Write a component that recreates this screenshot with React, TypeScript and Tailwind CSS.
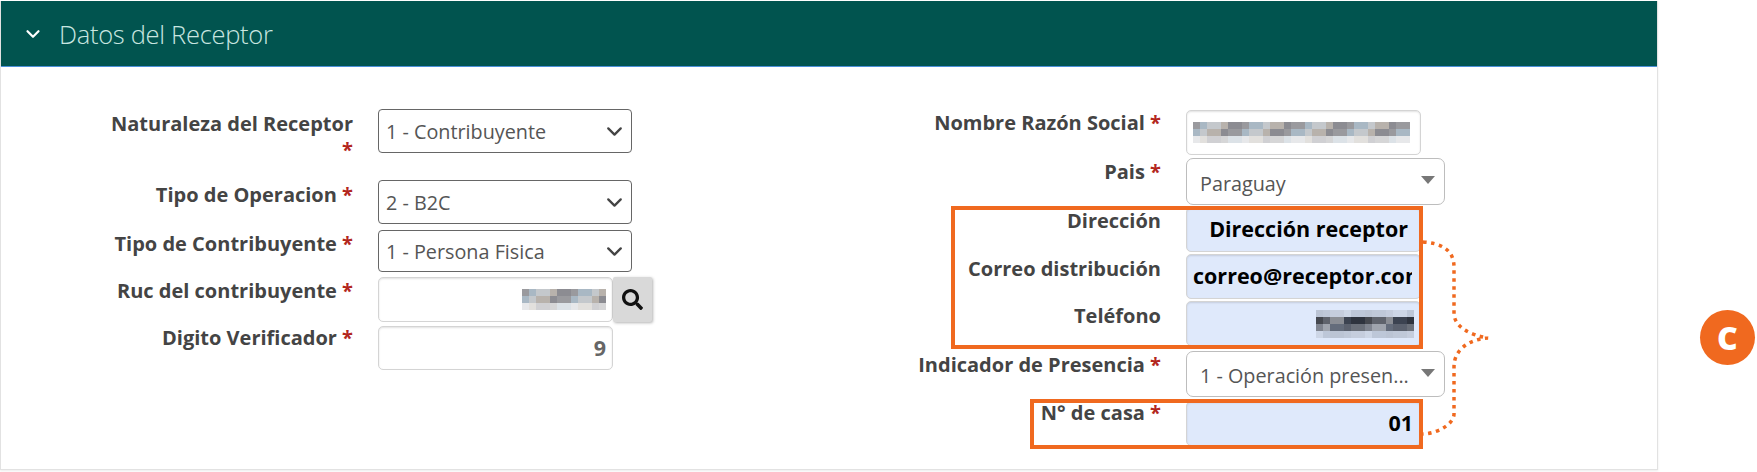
import React from 'react';
import { ChevronDown } from 'lucide-react';
import { FaSearch } from 'react-icons/fa';

const labelClasses = "block text-right font-bold text-[20px] leading-[26px] text-[#444]";
const inputBase = "rounded-[5px] border border-[#d4d4d4] shadow-[inset_0_1px_2px_rgba(0,0,0,0.12)] flex items-center text-[21.5px] overflow-hidden whitespace-nowrap";
const filledInput = "bg-[#dfe9fb] font-bold text-black";

const Star = () => <span className="text-[#b3261e]"> *</span>;

// pixelated stand-in for the blurred-out values
const Blur = ({ width, dark }: { width: number; dark?: boolean }) => {
    const cols = Math.round(width / 7);
    const shades = dark ? ['#2f343f', '#5f636c', '#3c4351', '#45484f', '#8a8d94'] : ['#9a9a9e', '#c4c8cc', '#8c8c92', '#a9b8c4', '#b8b2ac'];
    const rows = dark ? [0.2, 1, 0.75, 0.2] : [1, 1, 0.4];
    return (
        <span className="flex flex-col shrink-0">
            {rows.map((opacity, r) => (
                <span key={r} className="flex" style={{ opacity }}>
                    {Array.from({ length: cols }).map((_, i) => (
                        <span key={i} className="w-[7px] h-[7px]" style={{ backgroundColor: shades[(i * 7 + r * 3 + (i % 3)) % 5] }} />
                    ))}
                </span>
            ))}
        </span>
    );
};

const LeftRow = ({ label, children, className }: { label: React.ReactNode; children: React.ReactNode; className?: string }) => (
    <div className={`flex ${className || ''}`}>
        <div className="w-[352px] shrink-0 pl-[104px]">{label}</div>
        <div className="ml-[25px]">{children}</div>
    </div>
);

const NativeSelect = ({ text, height }: { text: string; height: string }) => (
    <div className={`w-[254px] ${height} rounded-[4px] border border-[#666] bg-white flex items-center justify-between pl-[7px] pr-[4px] text-[19.8px] text-[#555]`}>
        <span className="pt-[2px]">{text}</span>
        <ChevronDown size={25} strokeWidth={2.2} className="text-[#444]" />
    </div>
);

const RoundSelect = ({ text, height }: { text: string; height: string }) => (
    <div className={`w-[259px] ${height} rounded-[7px] border border-[#bdbdbd] bg-white flex items-center justify-between pl-[13px] pr-[9px] text-[19.8px] text-[#555]`}>
        <span className="pt-[4px]">{text}</span>
        <span className="w-0 h-0 mb-[3px] border-l-[7px] border-r-[7px] border-t-[8px] border-l-transparent border-r-transparent border-t-[#777]" />
    </div>
);

const rightRows = [
    { label: 'Nombre Razón Social', star: true, offset: '', row: '', body: <div className={`${inputBase} w-[235px] h-[45px] pl-[6px]`}><Blur width={217} /></div> },
    { label: 'Pais', star: true, offset: 'pt-[1px]', row: 'mt-[3px]', body: <RoundSelect text="Paraguay" height="h-[47px]" /> },
    { label: 'Dirección', star: false, offset: 'pt-[1px]', row: 'mt-[2px]', body: <div className={`${inputBase} ${filledInput} w-[235px] h-[45px] justify-end pr-[12px]`}>Dirección receptor</div> },
    { label: 'Correo distribución', star: false, offset: 'pt-[2px]', row: 'mt-[2px]', body: <div className={`${inputBase} ${filledInput} w-[235px] h-[45px] pl-[6px]`}><span className="block w-[219px] overflow-hidden">correo@receptor.com</span></div> },
    { label: 'Teléfono', star: false, offset: 'pt-[2px]', row: 'mt-[2px]', body: <div className={`${inputBase} w-[235px] h-[45px] justify-end pr-[6px] bg-[#dfe9fb]`}><Blur width={98} dark /></div> },
    { label: 'Indicador de Presencia', star: true, offset: 'pt-[1px]', row: 'mt-[5px]', body: <RoundSelect text="1 - Operación presen..." height="h-[46px]" /> },
    { label: 'N° de casa', star: true, offset: '-mt-[1px]', row: 'mt-[4px]', body: <div className={`${inputBase} ${filledInput} w-[235px] h-[45px] justify-end pr-[7px]`}>01</div> },
];

const App: React.FC = () => {
    return (
        <div className="relative w-[1757px] h-[472px] bg-white font-['Open_Sans','Noto_Sans',sans-serif]">
            <div className="w-[1658px] h-[469px] mt-[1px] border-l border-r border-b border-[#e2e2e2] shadow-[0_1px_2px_rgba(0,0,0,0.08)]">
                {/* Header bar */}
                <div className="h-[66px] bg-[#01544f] border-b border-[#4a90d9] flex items-center pl-[21px]">
                    <ChevronDown size={22} strokeWidth={2.4} className="text-white" />
                    <span className="ml-[15px] pt-[2px] text-[25.5px] font-light text-[#c9e6e0] tracking-[-0.3px]">Datos del Receptor</span>
                </div>

                <div className="flex">
                    {/* Left column */}
                    <div className="w-[820px] pt-[42px]">
                        <LeftRow label={<p className={`${labelClasses} pt-[2px]`}>Naturaleza del Receptor<Star /></p>} className="h-[53px]">
                            <NativeSelect text="1 - Contribuyente" height="h-[44px]" />
                        </LeftRow>
                        <LeftRow label={<p className={`${labelClasses} pt-[2px]`}>Tipo de Operacion<Star /></p>} className="mt-[18px]">
                            <NativeSelect text="2 - B2C" height="h-[44px]" />
                        </LeftRow>
                        <LeftRow label={<p className={`${labelClasses} pt-[1px]`}>Tipo de Contribuyente<Star /></p>} className="mt-[6px]">
                            <NativeSelect text="1 - Persona Fisica" height="h-[42px]" />
                        </LeftRow>
                        <LeftRow label={<p className={`${labelClasses} pt-[1px]`}>Ruc del contribuyente<Star /></p>} className="mt-[5px]">
                            <div className="flex">
                                <div className={`${inputBase} w-[235px] h-[45px] justify-end pr-[6px] bg-white`}><Blur width={84} /></div>
                                <div className="w-[39px] h-[45px] bg-[#d9d9d9] rounded-[2px] shadow-[1px_1px_3px_rgba(0,0,0,0.3)] flex items-center justify-center">
                                    <FaSearch size={21} className="text-[#111]" />
                                </div>
                            </div>
                        </LeftRow>
                        <LeftRow label={<p className={`${labelClasses} -mt-[1px]`}>Digito Verificador<Star /></p>} className="mt-[4px]">
                            <div className={`${inputBase} w-[235px] h-[44px] justify-end pr-[6px] font-bold text-[#666]`}>9</div>
                        </LeftRow>
                    </div>

                    {/* Right column */}
                    <div className="pt-[43px] flex flex-col">
                        {rightRows.map(row => (
                            <div key={row.label} className={`flex ${row.row}`}>
                                <p className={`${labelClasses} w-[340px] ${row.offset}`}>{row.label}{row.star && <Star />}</p>
                                <div className="ml-[25px]">{row.body}</div>
                            </div>
                        ))}
                    </div>
                </div>
            </div>

            {/* Orange highlight annotations */}
            <div className="absolute left-[951px] top-[205px] w-[472px] h-[143px] border-[4px] border-[#f0691f]" />
            <div className="absolute left-[1030px] top-[398px] w-[393px] h-[50px] border-[4px] border-[#f0691f]" />
            <svg className="absolute left-[1420px] top-[230px]" width="80" height="210" viewBox="0 0 80 210" fill="none">
                <path d="M3 11 C20 12 34 18 34 36 V82 C34 96 50 104 68 107 C50 108 34 118 34 136 V183 C34 192 20 202 3 203" stroke="#f0691f" strokeWidth="3.5" strokeDasharray="3.5 4.5" />
            </svg>
            <div className="absolute left-[1700px] top-[309px] w-[55px] h-[55px] rounded-full bg-[#f0691f] flex items-center justify-center text-white font-extrabold text-[32px]">C</div>
        </div>
    );
};

export default App;
